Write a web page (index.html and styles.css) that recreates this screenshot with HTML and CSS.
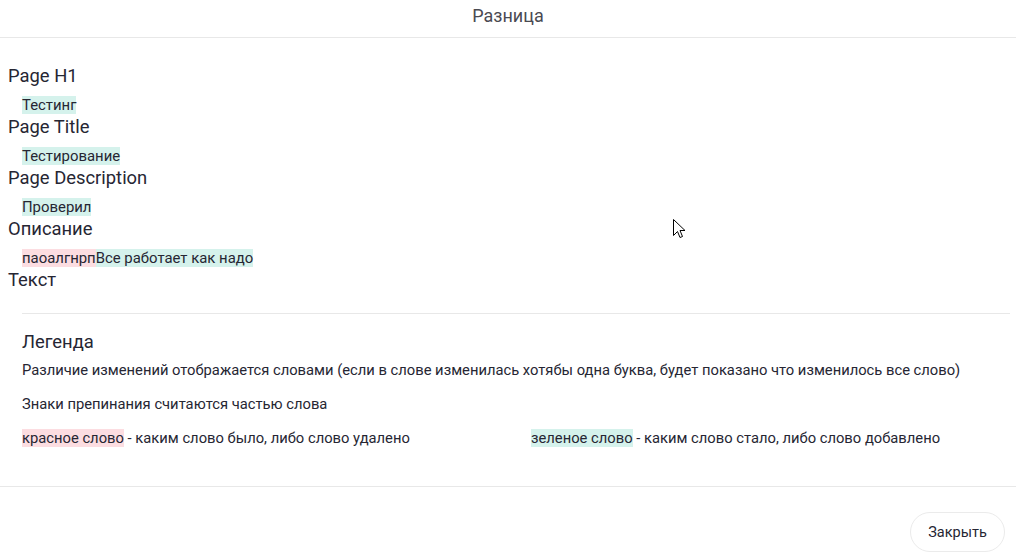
FILE: index.html
```html
<!DOCTYPE html>
<html lang="ru">
<head>
<meta charset="utf-8">
<title>Разница</title>
<link rel="stylesheet" href="styles.css">
</head>
<body>
<div class="modal">
  <header class="modal-header">Разница</header>
  <div class="modal-body">
    <div class="diff">
      <div class="field-label">Page H1</div>
      <div class="field-value"><span class="add">Тестинг</span></div>
      <div class="field-label">Page Title</div>
      <div class="field-value"><span class="add">Тестирование</span></div>
      <div class="field-label">Page Description</div>
      <div class="field-value"><span class="add">Проверил</span></div>
      <div class="field-label">Описание</div>
      <div class="field-value"><span class="del">паоалгнрп</span><span class="add">Все работает как надо</span></div>
      <div class="field-label">Текст</div>
    </div>
    <div class="legend">
      <h3 class="legend-title">Легенда</h3>
      <p class="legend-text">Различие изменений отображается словами (если в слове изменилась хотябы одна буква, будет показано что изменилось все слово)</p>
      <p class="legend-text">Знаки препинания считаются частью слова</p>
      <div class="legend-cols">
        <p class="legend-item"><span class="del">красное слово</span> - каким слово было, либо слово удалено</p>
        <p class="legend-item"><span class="add">зеленое слово</span> - каким слово стало, либо слово добавлено</p>
      </div>
    </div>
  </div>
  <footer class="modal-footer">
    <button class="btn-close" type="button">Закрыть</button>
  </footer>
</div>
<svg class="cursor" width="13" height="21" viewBox="0 0 13 21" aria-hidden="true">
  <path d="M0.5 0.5 L0.5 16.5 L4.5 12.5 L7 18.5 L9.5 17.5 L7 11.5 L12 11.5 Z" fill="#fff" stroke="#000" stroke-width="1"/>
</svg>
</body>
</html>
```

FILE: styles.css
```css
html, body {
  margin: 0;
  padding: 0;
  background: #fff;
}

body {
  font-family: Roboto, "Noto Sans", sans-serif;
  color: #262633;
  position: relative;
  width: 1016px;
  height: 559px;
  overflow: hidden;
}

.modal {
  display: flex;
  flex-direction: column;
}

.modal-header {
  height: 33px;
  padding-top: 4px;
  border-bottom: 1px solid #e8e8e8;
  text-align: center;
  font-size: 18px;
  line-height: 24px;
  color: #4a4a52;
}

.modal-body {
  padding: 26px 6px 0 8px;
  border-bottom: 1px solid #e8e8e8;
}

.diff {
  display: flex;
  flex-direction: column;
}

.field-label {
  font-size: 18.4px;
  line-height: 24px;
  height: 24px;
}

.field-value {
  font-size: 14.9px;
  line-height: 19px;
  padding: 8px 0 0 14px;
}

.add {
  background: #d5f2ec;
}

.del {
  background: #fcdde1;
}

.legend {
  margin: 21px 0 0 14px;
  border-top: 1px solid #e8e8e8;
  padding: 16px 0 38px;
}

.legend-title {
  margin: 0;
  font-size: 18.4px;
  font-weight: normal;
  line-height: 24px;
}

.legend-text,
.legend-item {
  margin: 0;
  font-size: 14.75px;
  line-height: 19px;
}

.legend-title + .legend-text {
  margin-top: 7px;
}

.legend-text + .legend-text,
.legend-text + .legend-cols {
  margin-top: 15px;
}

.legend-cols {
  display: grid;
  grid-template-columns: 509px 1fr;
}

.modal-footer {
  display: flex;
  justify-content: flex-end;
  padding: 25px 11px 0 0;
}

.btn-close {
  font-family: inherit;
  font-size: 14.5px;
  color: #262633;
  background: #fff;
  border: 1px solid #ebebeb;
  border-radius: 20px;
  width: 95px;
  height: 40px;
  padding: 0;
}

.cursor {
  position: absolute;
  left: 673px;
  top: 219px;
}
```
